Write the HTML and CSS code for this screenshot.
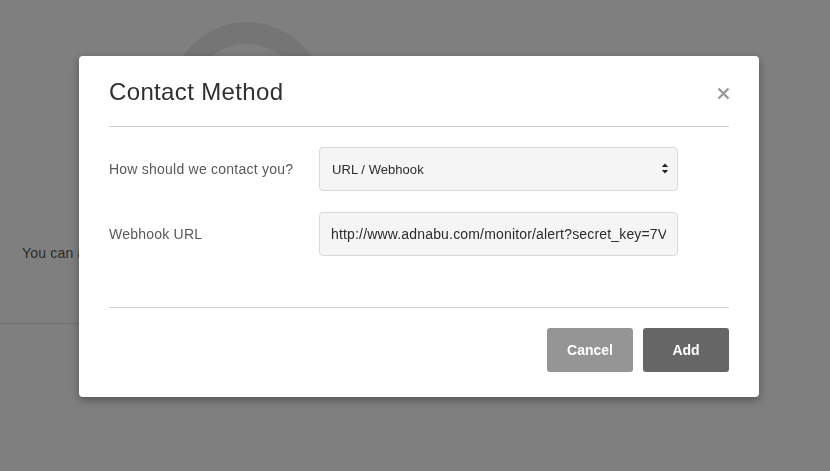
FILE: index.html
```html
<!DOCTYPE html>
<html lang="en">
<head>
<meta charset="utf-8">
<title>Contact Method</title>
<link rel="stylesheet" href="styles.css">
</head>
<body>
<div class="page">
  <svg class="ring" width="154" height="154" viewBox="0 0 154 154" aria-hidden="true">
    <circle cx="77" cy="77" r="66" fill="none" stroke="#ebebeb" stroke-width="22"/>
  </svg>
  <p class="page-text">You can add contact methods to receive alerts.</p>
  <div class="page-rule"></div>
</div>

<div class="overlay">
  <div class="modal" role="dialog" aria-labelledby="modal-title">
    <div class="modal-header">
      <h2 class="modal-title" id="modal-title">Contact Method</h2>
      <button class="close" type="button" aria-label="Close">
        <svg width="13" height="13" viewBox="0 0 13 13" aria-hidden="true">
          <path d="M1.5 1.5 L11.5 11.5 M11.5 1.5 L1.5 11.5" stroke="#9a9a9a" stroke-width="2.4" stroke-linecap="butt" fill="none"/>
        </svg>
      </button>
    </div>
    <div class="modal-body">
      <div class="form-row">
        <label class="form-label" for="method">How should we contact you?</label>
        <div class="select-wrap">
          <select class="form-control select" id="method">
            <option>URL / Webhook</option>
            <option>Email</option>
            <option>SMS</option>
          </select>
          <svg class="select-arrows" width="8" height="13" viewBox="0 0 8 13" aria-hidden="true">
            <path d="M4 1.5 L7.2 5 L0.8 5 Z" fill="#222"/>
            <path d="M4 11.5 L7.2 8 L0.8 8 Z" fill="#222"/>
          </svg>
        </div>
      </div>
      <div class="form-row">
        <label class="form-label" for="url">Webhook URL</label>
        <input class="form-control input" id="url" type="text" value="http://www.adnabu.com/monitor/alert?secret_key=7VQ2x9Lm">
      </div>
    </div>
    <div class="modal-footer">
      <button class="btn btn-cancel" type="button">Cancel</button>
      <button class="btn btn-add" type="button">Add</button>
    </div>
  </div>
</div>
</body>
</html>
```

FILE: styles.css
```css
* {
  box-sizing: border-box;
}

html, body {
  margin: 0;
  padding: 0;
}

body {
  width: 830px;
  height: 471px;
  overflow: hidden;
  background: #ffffff;
  font-family: "Liberation Sans", Arial, Helvetica, sans-serif;
  color: #333333;
}

/* background page (dimmed by overlay) */
.page {
  padding-top: 22px;
}

.ring {
  display: block;
  margin-left: 170px;
}

.page-text {
  margin: 67px 0 0 22px;
  font-size: 14px;
  line-height: 20px;
  letter-spacing: 0.2px;
  color: #575757;
  white-space: nowrap;
}

.page-rule {
  margin-top: 60px;
  width: 520px;
  border-top: 1px solid #dedede;
}

/* overlay + modal */
.overlay {
  position: fixed;
  inset: 0;
  background: rgba(0, 0, 0, 0.5);
}

.modal {
  margin: 56px 0 0 79px;
  width: 680px;
  padding: 0 30px;
  background: #ffffff;
  border-radius: 4px;
  box-shadow: 0 3px 10px rgba(0, 0, 0, 0.35);
}

.modal-header {
  height: 71px;
  display: flex;
  align-items: center;
  justify-content: space-between;
  border-bottom: 1px solid #cfcfcf;
}

.modal-title {
  margin: 0;
  font-size: 24px;
  line-height: 27px;
  font-weight: normal;
  letter-spacing: 0.35px;
  color: #303030;
}

.close {
  margin: 5px -1px 0 0;
  padding: 0;
  border: 0;
  background: none;
  display: flex;
  cursor: pointer;
}

.modal-body {
  padding: 20px 0 51px;
  display: flex;
  flex-direction: column;
  gap: 21px;
}

.form-row {
  display: grid;
  grid-template-columns: 210px 359px;
  align-items: center;
  height: 44px;
}

.form-label {
  font-size: 14px;
  line-height: 20px;
  letter-spacing: 0.23px;
  color: #595959;
}

.form-control {
  display: block;
  width: 359px;
  height: 44px;
  margin: 0;
  border: 1px solid #dadada;
  border-radius: 4px;
  background: #f5f5f5;
  font-family: "Liberation Sans", Arial, Helvetica, sans-serif;
  color: #2b2b2b;
  outline: none;
}

.select-wrap {
  position: relative;
}

.select {
  appearance: none;
  -webkit-appearance: none;
  padding: 0 30px 0 12px;
  font-size: 13px;
  letter-spacing: 0.05px;
}

.select-arrows {
  position: absolute;
  right: 9px;
  top: 15px;
  pointer-events: none;
}

.input {
  padding: 0 11px 0 11px;
  font-size: 14px;
  letter-spacing: 0.17px;
}

.modal-footer {
  border-top: 1px solid #cfcfcf;
  padding: 20px 0 25px;
  display: flex;
  justify-content: flex-end;
  gap: 10px;
}

.btn {
  width: 86px;
  height: 44px;
  border: 0;
  border-radius: 3px;
  color: #ffffff;
  font-family: "Liberation Sans", Arial, Helvetica, sans-serif;
  font-size: 14px;
  font-weight: bold;
  cursor: pointer;
}

.btn-cancel {
  background: #959595;
}

.btn-add {
  background: #666666;
}
```
